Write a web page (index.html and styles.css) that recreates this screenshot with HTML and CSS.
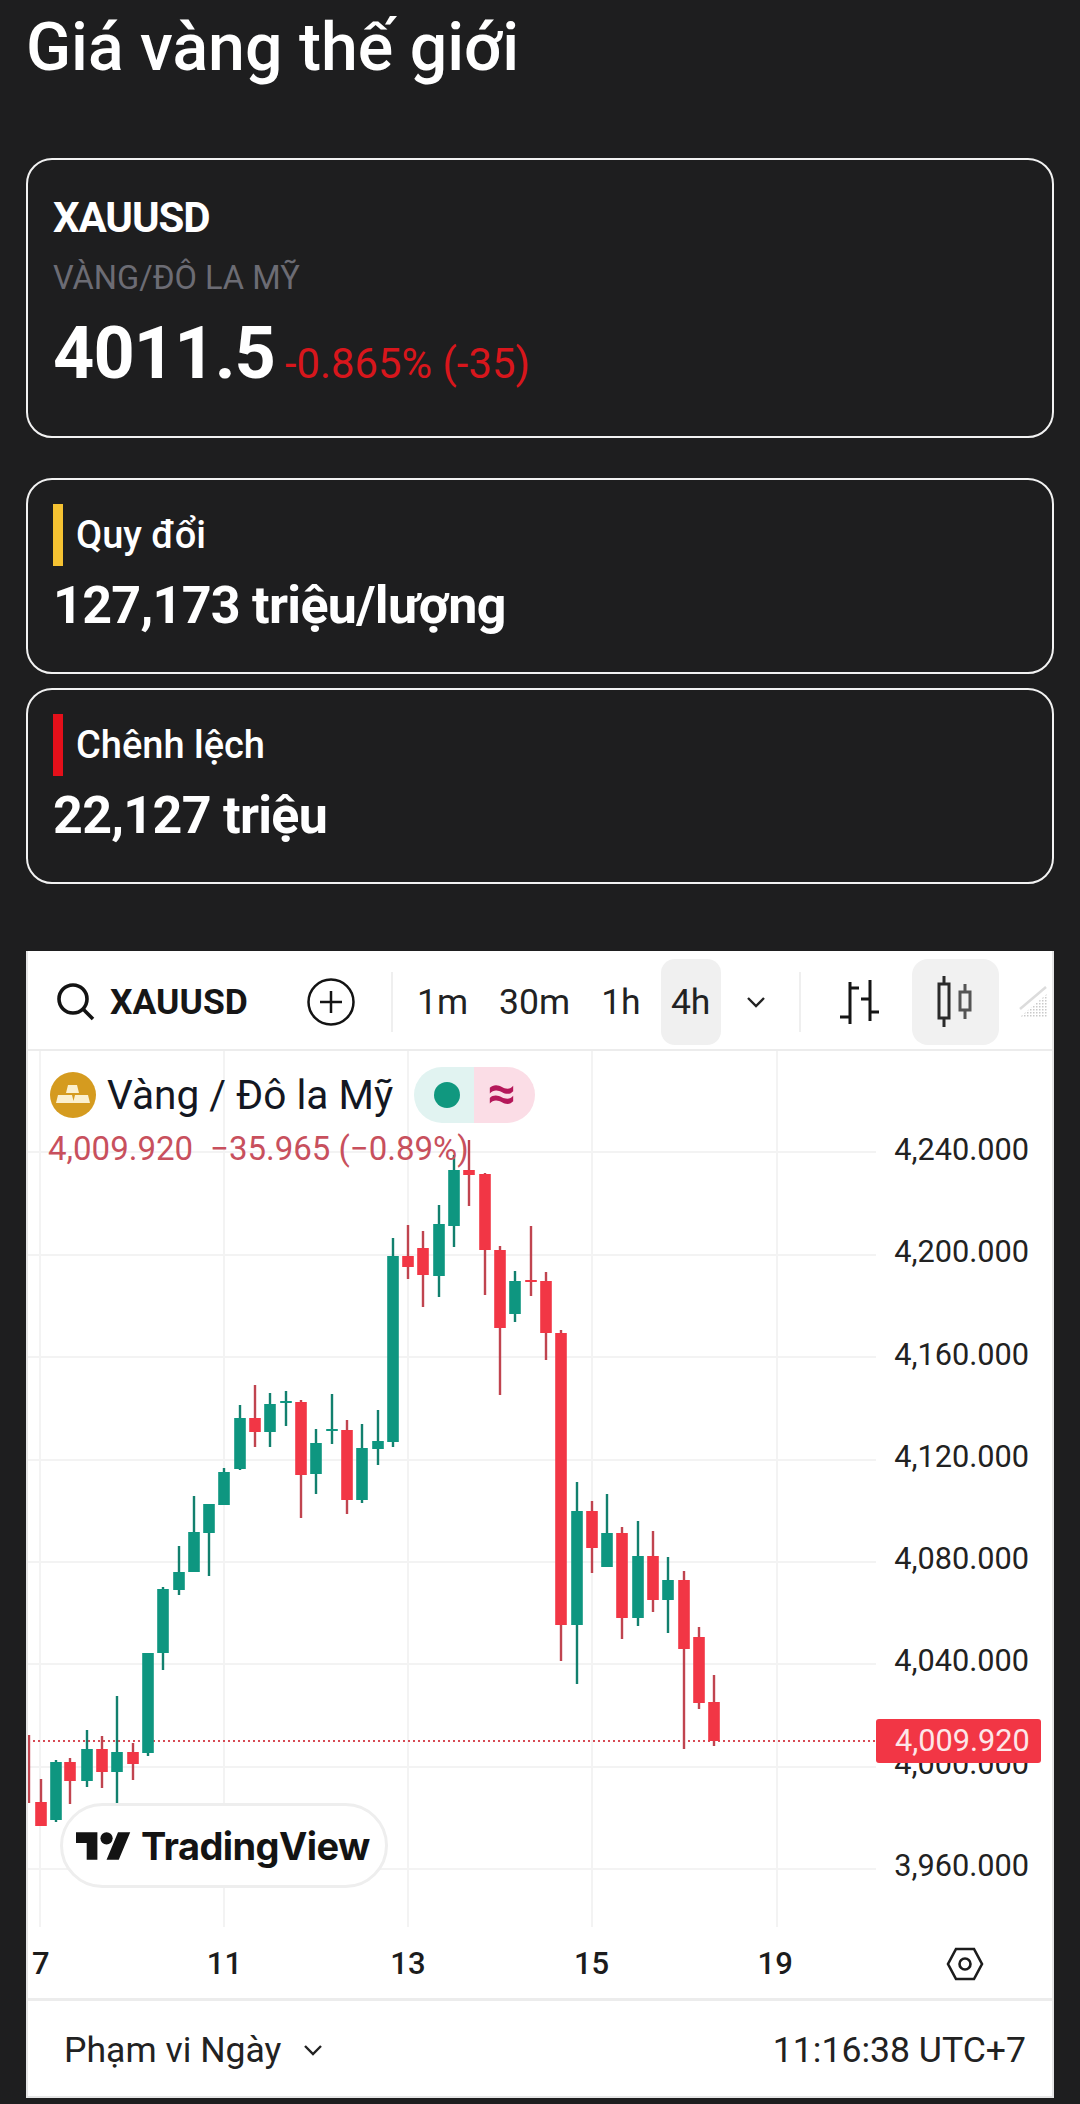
FILE: index.html
```html
<!DOCTYPE html>
<html lang="vi">
<head>
<meta charset="utf-8">
<title>Giá vàng thế giới</title>
<link rel="stylesheet" href="styles.css">
</head>
<body>
<main class="page">
  <h1 class="title">Giá vàng thế giới</h1>

  <section class="card card-quote">
    <div class="symbol">XAUUSD</div>
    <div class="pair">VÀNG/ĐÔ LA MỸ</div>
    <div class="quote">
      <span class="price">4011.5</span>
      <span class="delta">-0.865% (-35)</span>
    </div>
  </section>

  <section class="card card-stat first-stat">
    <div class="stat-head"><span class="bar bar-yellow"></span><span class="stat-label">Quy đổi</span></div>
    <div class="stat-value">127,173 triệu/lượng</div>
  </section>

  <section class="card card-stat">
    <div class="stat-head"><span class="bar bar-red"></span><span class="stat-label">Chênh lệch</span></div>
    <div class="stat-value">22,127 triệu</div>
  </section>

  <section class="panel">
    <header class="toolbar">
      <svg class="ic-search" viewBox="0 0 38 38"><circle cx="16" cy="16" r="14"/><path d="M26 26l10 10"/></svg>
      <span class="tb-symbol">XAUUSD</span>
      <svg class="ic-plus" viewBox="0 0 48 48"><circle cx="24" cy="24" r="22.5"/><path d="M24 13v22M13 24h22"/></svg>
      <span class="tb-sep sep-a"></span>
      <span class="tf tf-1m">1m</span>
      <span class="tf tf-30m">30m</span>
      <span class="tf tf-1h">1h</span>
      <span class="tf tf-4h">4h</span>
      <svg class="ic-chev chev-tb" viewBox="0 0 20 12"><path d="M2 2l8 8 8-8"/></svg>
      <span class="tb-sep sep-b"></span>
      <svg class="ic-bars" viewBox="0 0 40 44"><path d="M10 2v42M10 8h9M0 37h10M30 0v41M21 19h9M30 32h9"/></svg>
      <span class="candle-btn">
        <svg class="ic-candles" viewBox="0 0 36 52"><path class="c-big" d="M7 0v8M7 42v9M2 8h10v34H2z"/><path class="c-small" d="M28 8v8M28 34v9M23 16h10v18H23z"/></svg>
      </span>
      <svg class="ic-hatch" viewBox="0 0 32 34">
        <defs><pattern id="dots" width="3" height="3" patternUnits="userSpaceOnUse"><rect width="1.5" height="1.5" fill="#c9c9c9"/></pattern></defs>
        <path class="hatch-fill" d="M2 32L30 8v24z"/><path class="hatch-line" d="M2 24L28 2"/>
      </svg>
    </header>

    <div class="plot">
      <svg class="canvas" viewBox="28 1051 1024 877" preserveAspectRatio="none">
        <path class="grid" d="M40 1051V1928M224 1051V1928M408 1051V1928M592 1051V1928M777 1051V1928"/>
        <path class="grid" d="M28 1152H876M28 1255H876M28 1357H876M28 1460H876M28 1562H876M28 1664H876M28 1767H876M28 1869H876"/>
        <path class="last-line" d="M28 1741H876"/>
        <path class="wick-red" d="M29 1735V1803M41 1779V1826M70 1758V1804M102 1736V1788M133 1743V1780M255 1385V1447M301 1400V1518M347 1420V1514M408 1225V1279M423 1231V1307M469 1140V1206M485 1173V1295M500 1246V1395M531 1226V1296M546 1272V1360M561 1330V1661M592 1501V1573M622 1527V1639M653 1531V1612M684 1571V1749M699 1627V1709M714 1675V1746"/>
        <path class="wick-green" d="M56 1760V1822M87 1730V1787M117 1696V1803M148 1653V1756M163 1587V1670M179 1546V1595M194 1496V1572M209 1504V1576M224 1468V1505M240 1405V1470M270 1393V1447M286 1391V1426M316 1429V1494M332 1394V1444M362 1424V1503M378 1410V1465M393 1238V1447M439 1205V1297M454 1155V1247M515 1271V1322M577 1482V1684M607 1494V1567M638 1521V1626M668 1557V1633"/>
        <path class="body-red" d="M41 1802V1826M70 1762V1781M102 1749V1772M133 1752V1764M255 1418V1432M301 1402V1475M347 1430V1500M408 1256V1267M423 1248V1275M469 1170V1175M485 1174V1250M500 1250V1328M531 1280V1282M546 1281V1333M561 1333V1625M592 1511V1548M622 1533V1618M653 1556V1600M684 1580V1649M699 1637V1703M714 1702V1741"/>
        <path class="body-green" d="M56 1762V1820M87 1749V1781M117 1752V1772M148 1653V1753M163 1589V1653M179 1572V1590M194 1532V1572M209 1504V1533M224 1472V1505M240 1418V1469M270 1404V1432M286 1401V1403M316 1443V1474M332 1429V1431M362 1448V1500M378 1441V1449M393 1256V1442M439 1224V1276M454 1170V1226M515 1281V1314M577 1511V1625M607 1533V1567M638 1556V1618M668 1580V1600"/>
      </svg>

      <div class="legend">
        <svg class="gold" viewBox="0 0 46 46"><circle cx="23" cy="23" r="23"/><path d="M18 13h9l2 8H16zM8 23h14l2 8H6zM25 23h13l2 8H23z"/></svg>
        <span class="legend-name">Vàng / Đô la Mỹ</span>
        <span class="pill"><span class="pill-left"><span class="dot"></span></span><span class="pill-right">≈</span></span>
      </div>
      <div class="values"><span>4,009.920</span><span>−35.965 (−0.89%)</span></div>

      <div class="price-axis">
        <span>4,240.000</span><span>4,200.000</span><span>4,160.000</span><span>4,120.000</span><span>4,080.000</span><span>4,040.000</span><span>4,000.000</span><span>3,960.000</span>
      </div>
      <div class="price-tag">4,009.920</div>

      <div class="badge">
        <svg class="tv-logo" viewBox="0 4 36 18"><path d="M14 22H7V11H0V4h14v18zM28 22h-8l7.5-18h8L28 22z"/><circle cx="20" cy="8" r="4"/></svg>
        <span class="tv-name">TradingView</span>
      </div>
    </div>

    <div class="time-axis">
      <span>7</span><span>11</span><span>13</span><span>15</span><span>19</span>
      <span class="hex-cell"><svg class="ic-hex" viewBox="0 0 38 34"><path d="M10 2h18l8 15-8 15H10L2 17z"/><circle cx="19" cy="17" r="5.5"/></svg></span>
    </div>

    <footer class="foot">
      <span class="range">Phạm vi Ngày <svg class="ic-chev chev-foot" viewBox="0 0 20 12"><path d="M2 2l8 8 8-8"/></svg></span>
      <span class="clock">11:16:38 UTC+7</span>
    </footer>
  </section>
</main>
</body>
</html>
```
FILE: styles.css
```css
* { box-sizing: border-box; }
html, body { margin: 0; padding: 0; }
body {
  width: 1080px;
  height: 2104px;
  overflow: hidden;
  background: #1e1e1f;
  color: #fff;
  font-family: Roboto, "Noto Sans", sans-serif;
}
.page { padding: 0 26px; }

.title {
  margin: 0;
  height: 158px;
  padding: 8px 0 0;
  font-size: 66.2px;
  line-height: 80px;
  font-weight: 500;
}

.card {
  border: 2px solid #f2f2f2;
  border-radius: 26px;
  padding-left: 25px;
}
.card-quote { height: 280px; padding-top: 33px; margin-bottom: 40px; }
.symbol { font-size: 42px; line-height: 50px; font-weight: 700; letter-spacing: -1.1px; }
.pair { margin-top: 17px; font-size: 32.6px; line-height: 36px; color: #6c6c74; }
.quote { display: flex; align-items: baseline; gap: 10px; margin-top: 18px; }
.price { font-size: 72px; line-height: 80px; font-weight: 700; letter-spacing: -0.9px; }
.delta { font-size: 41.8px; color: #d8161c; }

.card-stat { height: 196px; padding-top: 24px; }
.first-stat { margin-bottom: 14px; }
.stat-head { display: flex; align-items: center; gap: 13px; height: 62px; }
.bar { width: 10px; height: 62px; }
.bar-yellow { background: #f5c232; }
.bar-red { background: #e4101a; }
.stat-label { font-size: 38px; font-weight: 500; }
.stat-value { margin-top: 8px; font-size: 52px; line-height: 64px; font-weight: 700; letter-spacing: -0.7px; }

.panel {
  margin-top: 67px;
  width: 1028px;
  height: 1147px;
  background: #fff;
  color: #131722;
  border: solid #e6e6e6;
  border-width: 0 2px 2px;
}

.toolbar {
  display: flex;
  align-items: center;
  height: 100px;
  border-bottom: 2px solid #ececec;
  padding-top: 4px;
}
.ic-search { width: 38px; height: 38px; margin-left: 29px; fill: none; stroke: #131313; stroke-width: 3.6; flex: none; }
.tb-symbol { margin-left: 15px; font-size: 35.5px; font-weight: 700; color: #161616; width: 197px; flex: none; }
.ic-plus { width: 48px; height: 48px; fill: none; stroke: #131313; stroke-width: 2.5; flex: none; }
.tb-sep { width: 2px; height: 60px; background: #efefef; flex: none; }
.sep-a { margin-left: 36px; }
.tf { font-size: 35.5px; color: #222; flex: none; }
.tf-1m { margin-left: 24px; }
.tf-30m { margin-left: 31px; }
.tf-1h { margin-left: 31px; }
.tf-4h {
  margin-left: 20px;
  width: 60px;
  height: 86px;
  line-height: 86px;
  text-align: center;
  background: #f0f0f0;
  border-radius: 14px;
}
.ic-chev { fill: none; stroke: #222; stroke-width: 2.4; }
.chev-tb { width: 20px; height: 12px; margin-left: 25px; flex: none; }
.sep-b { margin-left: 33px; }
.ic-bars { width: 40px; height: 44px; margin-left: 39px; fill: none; stroke: #151515; stroke-width: 3; flex: none; }
.candle-btn {
  display: flex;
  align-items: center;
  justify-content: center;
  width: 87px;
  height: 86px;
  margin-left: 32px;
  background: #f1f1f1;
  border-radius: 16px;
  flex: none;
}
.ic-candles { width: 36px; height: 52px; fill: none; stroke-width: 3; }
.c-big { stroke: #2b2b2b; }
.c-small { stroke: #555; }
.ic-hatch { width: 32px; height: 34px; margin-left: 19px; flex: none; }
.hatch-fill { fill: url(#dots); }
.hatch-line { fill: none; stroke: #dcdcdc; stroke-width: 2.5; }

.plot { position: relative; height: 876px; overflow: hidden; }
.canvas { position: absolute; left: 0; top: 0; width: 1024px; height: 877px; }
.grid { fill: none; stroke: #f3f3f3; stroke-width: 2; }
.last-line { fill: none; stroke: #d84a55; stroke-width: 2; stroke-dasharray: 2 3; }
.wick-red { fill: none; stroke: #c0444f; stroke-width: 2.4; }
.wick-green { fill: none; stroke: #12806e; stroke-width: 2.4; }
.body-red { fill: none; stroke: #f23645; stroke-width: 11.6; }
.body-green { fill: none; stroke: #0e9680; stroke-width: 11.6; }

.legend {
  position: relative;
  display: flex;
  align-items: center;
  height: 56px;
  margin: 16px 0 0 22px;
}
.gold { width: 46px; height: 46px; flex: none; }
.gold circle { fill: #d59b1f; }
.gold path { fill: #fbf0cf; }
.legend-name { margin-left: 11px; font-size: 40.6px; color: #131722; }
.pill { display: flex; height: 56px; margin-left: 21px; border-radius: 28px; overflow: hidden; }
.pill-left { display: flex; align-items: center; justify-content: center; width: 60px; padding-left: 6px; background: #e1f3f1; }
.pill-right { width: 61px; padding-right: 6px; text-align: center; line-height: 52px; background: #fbdde6; color: #b5185a; font-size: 50px; font-weight: 700; }
.dot { width: 26px; height: 26px; border-radius: 50%; background: #10987f; }

.values {
  position: relative;
  display: flex;
  gap: 17px;
  margin: 6px 0 0 20px;
  font-size: 33px;
  line-height: 40px;
  color: #c8505d;
}

.price-axis {
  position: absolute;
  top: 48px;
  right: 23px;
  display: flex;
  flex-direction: column;
  align-items: flex-end;
  font-size: 30.7px;
  color: #222;
}
.price-axis span { height: 102.25px; line-height: 102.25px; }
.price-tag {
  position: absolute;
  left: 848px;
  top: 668px;
  width: 165px;
  height: 44px;
  line-height: 44px;
  padding-left: 19px;
  background: #f23645;
  border-radius: 3px;
  color: #fde6e8;
  font-size: 30.7px;
}

.badge {
  position: absolute;
  left: 32px;
  top: 752px;
  display: flex;
  align-items: center;
  gap: 10px;
  width: 328px;
  height: 85px;
  padding-left: 13px;
  background: #fff;
  border: 3px solid #eeeeee;
  border-radius: 43px;
}
.tv-logo { width: 55px; height: 28px; fill: #131313; flex: none; }
.tv-name { font-family: Inter, Roboto, sans-serif; font-size: 38px; font-weight: 700; letter-spacing: -0.6px; color: #131313; }

.time-axis {
  display: grid;
  grid-template-columns: repeat(5, 183.6px) 196px;
  align-items: center;
  height: 71px;
  margin-left: -79px;
  padding-top: 2px;
  font-size: 31px;
  font-weight: 500;
  color: #1c1c1c;
  text-align: center;
}
.hex-cell { display: flex; justify-content: center; }
.ic-hex { width: 38px; height: 34px; fill: none; stroke: #1c1c1c; stroke-width: 2.6; }

.foot {
  display: flex;
  align-items: center;
  justify-content: space-between;
  height: 98px;
  padding: 2px 26px 0 36px;
  border-top: 3px solid #ececec;
  font-size: 35.6px;
  color: #222;
}
.range { display: flex; align-items: center; gap: 22px; }
.chev-foot { width: 20px; height: 12px; }
```
